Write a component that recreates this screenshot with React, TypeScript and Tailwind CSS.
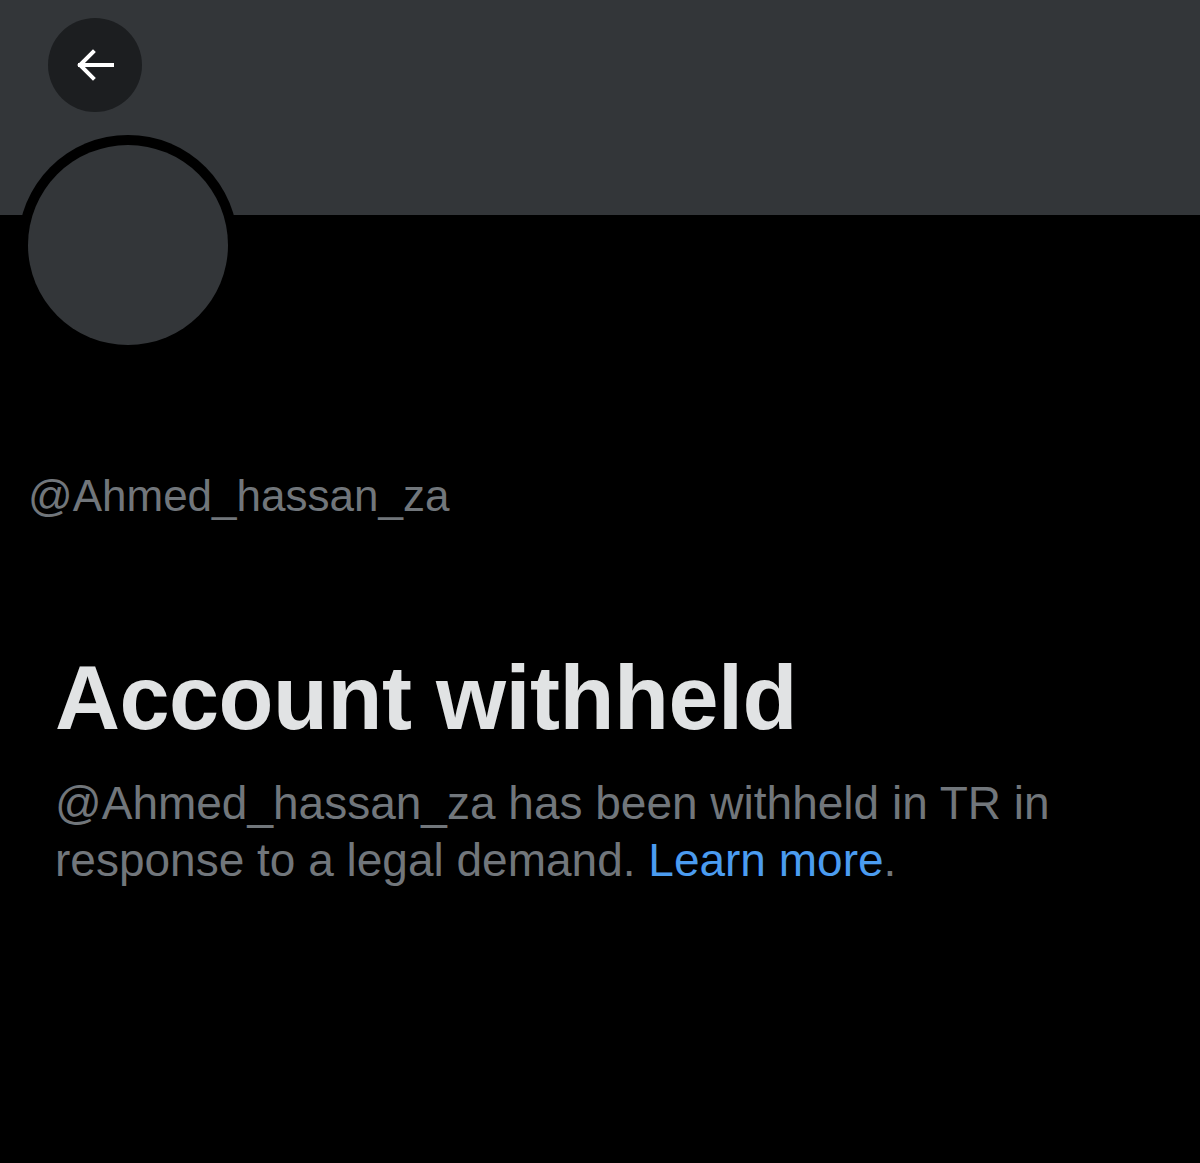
import React from "react";

export default function App() {
  return (
    <div
      className="w-[1200px] h-[1163px] bg-black overflow-hidden"
      style={{ fontFamily: '"Liberation Sans", Arial, sans-serif' }}
    >
      {/* banner */}
      <div className="h-[215px] bg-[#333639] pt-[18px] pl-[48px]">
        <button className="w-[94px] h-[94px] rounded-full bg-[#1c1e20] flex items-center justify-center">
          <svg width="38" height="32" viewBox="0 0 38 32" fill="none">
            <path
              d="M36 16H4M17 3L4 16l13 13"
              stroke="white"
              strokeWidth="4"
              strokeLinecap="square"
            />
          </svg>
        </button>
      </div>

      {/* avatar */}
      <div className="pl-[18px] -mt-[80px]">
        <div className="w-[220px] h-[220px] rounded-full bg-black p-[10px]">
          <div className="w-full h-full rounded-full bg-[#333639]" />
        </div>
      </div>

      {/* handle */}
      <div className="pl-[28px] mt-[116px] text-[44px] leading-[50px] text-[#71767b]">
        @Ahmed_hassan_za
      </div>

      {/* message */}
      <div className="pl-[55px] pr-[40px] mt-[127px]">
        <h1 className="text-[90px] leading-[100px] font-bold text-[#e1e3e4] tracking-[-0.5px]">
          Account withheld
        </h1>
        <p className="mt-[27px] text-[46px] leading-[57px] text-[#71767b] w-[1040px]">
          @Ahmed_hassan_za has been withheld in TR in response to a legal
          demand. <span className="text-[#4b9cf0]">Learn more</span>.
        </p>
      </div>
    </div>
  );
}
